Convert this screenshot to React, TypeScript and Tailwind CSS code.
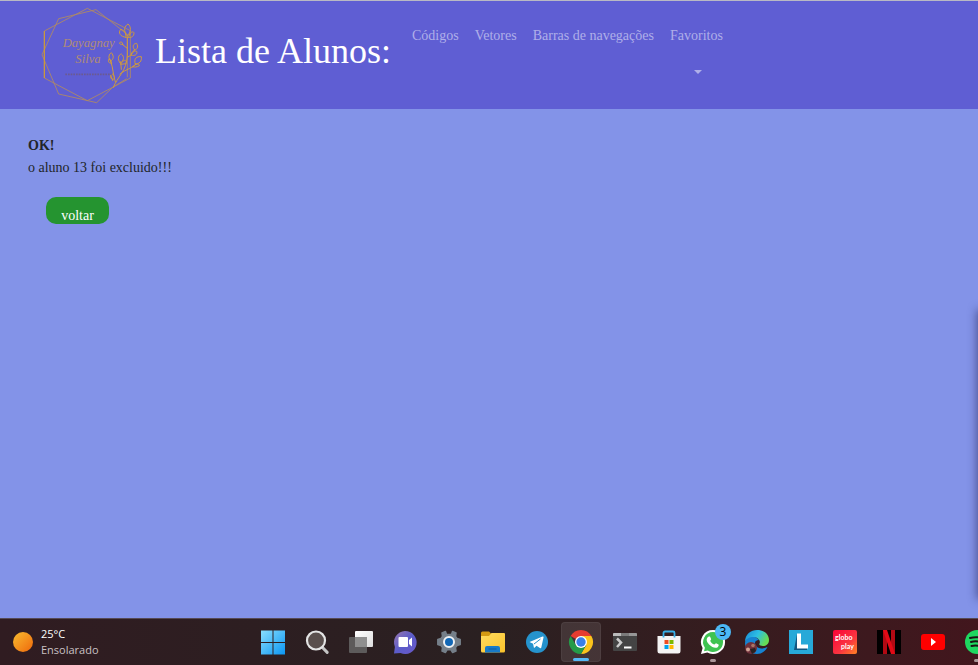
import React from "react";

function Logo() {
  return (
    <svg viewBox="18 9 327 312" className="h-[104px] w-[109px] shrink-0" role="img" aria-label="Logo">
      <g fill="none" stroke="#b08a62" strokeWidth="2.6" strokeLinejoin="round">
        <path d="M43 93 L172 25 L301 92 V234 L172 302 L43 234 Z" />
        <path d="M86 56 L198 29 L294 105 M36 164 L86 56 M36 164 L86 282 L200 308 L248 262 L290 236" />
        <path d="M43 93 V234" stroke="#d49e2f" strokeWidth="3" />
        <path d="M292 110 V232" />
      </g>
      <g fill="none" stroke="#cf9a3e" strokeWidth="3" strokeLinecap="round">
        <path d="M250 262 C262 230 290 215 292 165 V112 M256 246 C248 220 250 205 242 184 M270 222 C290 206 308 205 318 192 M292 172 C304 166 310 158 314 148 M292 145 L278 134 M248 240 l-6 -14 M274 208 L272 185" />
        <path d="M292 108 C278 92 284 78 294 72 C304 80 304 96 292 108 Z M288 112 C270 110 264 98 272 88 C286 92 288 102 288 112 Z M296 112 C298 98 308 92 312 98 C312 108 306 114 296 112 Z" />
        <path d="M314 150 C304 138 312 130 320 130 C326 142 322 148 314 150 Z M304 165 C304 154 310 152 320 154 C324 162 314 170 304 165 Z M316 192 C310 176 320 168 334 170 C336 184 328 192 316 192 Z M308 200 C320 188 330 192 328 197 C320 202 314 202 308 200 Z" />
        <path d="M242 184 C232 172 238 162 244 158 C252 168 252 176 242 184 Z M244 190 C232 190 234 178 238 176 Z M271 190 C260 176 266 164 274 162 C284 170 282 182 271 190 Z M272 192 C282 176 292 178 288 190 Z M248 240 C238 232 242 224 248 222 C256 230 254 236 248 240 Z M278 134 C264 134 268 124 274 126 Z" />
      </g>
      <g fill="#b08c76" fontFamily="Liberation Serif, serif" fontStyle="italic">
        <text x="98" y="142" fontSize="38">Dayagnay</text>
        <text x="136" y="188" fontSize="38">Silva</text>
      </g>
      <path d="M106 223 H245" stroke="#6b5a91" strokeWidth="5" strokeDasharray="5 3" />
    </svg>
  );
}

const icon = "h-6 w-6 shrink-0 overflow-visible";

function StartIcon() {
  return (
    <svg viewBox="0 0 24 24" className={icon}>
      <defs><linearGradient id="win" x1="0" y1="0" x2="24" y2="24" gradientUnits="userSpaceOnUse"><stop stopColor="#8be0fd" /><stop offset="1" stopColor="#0c96f2" /></linearGradient></defs>
      <path fill="url(#win)" d="M0 .500h11.500V12H0zM12.500 .500H24V12H12.500zM0 13h11.500v11.500H0zM12.500 13H24v11.500H12.500z" />
    </svg>
  );
}
function SearchIcon() {
  return (
    <svg viewBox="0 0 24 24" className={icon}>
      <path d="M17 17l5.2 5.4" stroke="#c4c4c4" strokeWidth="3" strokeLinecap="round" />
      <circle cx="11" cy="10.500" r="9" fill="#5a4f4d" stroke="#e4e4e4" strokeWidth="2.200" />
    </svg>
  );
}
function TaskViewIcon() {
  return (
    <svg viewBox="0 0 24 24" className={icon}>
      <defs><linearGradient id="tv" x2="1" y2="1"><stop stopColor="#fff" /><stop offset="1" stopColor="#ddd" /></linearGradient></defs>
      <rect x="6" y="1" width="18" height="16" rx="1" fill="url(#tv)" />
      <rect x="0" y="7" width="18" height="16" rx="1" fill="#5d5b5b" />
      <rect x="6" y="7" width="12" height="10" fill="#8f8f8f" />
    </svg>
  );
}
function ChatIcon() {
  return (
    <svg viewBox="0 0 24 24" className={icon}>
      <defs><linearGradient id="chat" x2="1" y2="1"><stop stopColor="#9a78ae" /><stop offset=".5" stopColor="#5b5cc9" /><stop offset="1" stopColor="#6a58c8" /></linearGradient></defs>
      <path fill="url(#chat)" d="M12 1a11.500 11.500 0 1 1-4.500 22L1 23.500 1.900 17A11.500 11.500 0 0 1 12 1z" />
      <rect x="5.500" y="7" width="9.500" height="10" rx="1" fill="#fff" />
      <path fill="#fff" d="M16 10l3-2.500v9L16 14z" />
    </svg>
  );
}
function SettingsIcon() {
  return (
    <svg viewBox="0 0 24 24" className={icon}>
      <path fill="#757f89" stroke="#757f89" strokeWidth="1.500" strokeLinejoin="round" d="M9.500 4.500L8.500 1.500 5 3l.5 3.500L4 8.500 .8 9.500v5l3.200 1L5.500 17.500 5 21l3.500 1.500L10 19.800h4l1.500 2.700L19 21l-.5-3.500L20 15.500l3.200-1v-5L20 8.500l-1.500-2L19 3l-3.500-1.500-1 3z" />
      <circle cx="12" cy="12" r="5" fill="#1267b5" stroke="#f0f2f4" strokeWidth="2" />
    </svg>
  );
}
function FolderIcon() {
  return (
    <svg viewBox="0 0 24 24" className={icon}>
      <defs><linearGradient id="folder" y2="1" x2="1"><stop stopColor="#ffdc60" /><stop offset="1" stopColor="#fac32b" /></linearGradient></defs>
      <path fill="#d49a13" d="M0 3a1.500 1.500 0 0 1 1.500-1.500H8L10.500 4v4H0z" />
      <path fill="url(#folder)" d="M0 6h8l2.500-3H23a1 1 0 0 1 1 1v17a1.500 1.500 0 0 1-1.500 1.500h-21A1.500 1.500 0 0 1 0 21z" />
      <path fill="#187bc8" d="M4 22.500V18a2 2 0 0 1 2-2h11a2 2 0 0 1 2 2v4.500z" /><path d="M7.500 19h8" stroke="#0e5c9e" />
    </svg>
  );
}
function TelegramIcon() {
  return (
    <svg viewBox="0 0 24 24" className={icon}>
      <circle cx="12" cy="12" r="11" fill="#2593cd" />
      <path fill="#fff" d="M4.500 12L17.500 6.500c.7-.3 1.200.2 1 1l-2.200 10c-.2.8-.7 1-1.400.6L11.500 15.700 9.800 17.500c-.5.5-.9.3-1-.3l-.7-3.500z" />
      <path d="M9 14l6.500-5" stroke="#2593cd" />
    </svg>
  );
}
function ChromeIcon() {
  return (
    <svg viewBox="0 0 24 24" className={icon}>
      <path fill="#e63c30" d="M12 12L1.600 6A12 12 0 0 1 22.400 6z" />
      <path fill="#fbc31c" d="M12 12V6h10.400A12 12 0 0 1 12 24l5.200-9z" />
      <path fill="#249b48" d="M12 12l5.200 3L12 24A12 12 0 0 1 1.600 6l5.200 9z" />
      <circle cx="12" cy="12" r="6" fill="#fff" /><circle cx="12" cy="12" r="4.700" fill="#397fe9" />
    </svg>
  );
}
function TerminalIcon() {
  return (
    <svg viewBox="0 0 24 24" className={icon}>
      <rect y="3" width="24" height="18" rx="1" fill="#444" />
      <path fill="#bbb" d="M0 4a1 1 0 0 1 1-1h7v3H0z" /><path fill="#7b7b7b" d="M8 3h8v3H8z" /><path fill="#969696" d="M16 3h7a1 1 0 0 1 1 1v2h-8z" />
      <path d="M4 8.500l4 4-4 4.500" fill="none" stroke="#ccc" strokeWidth="2.500" /><path d="M11 17.500h7.500" stroke="#fff" strokeWidth="2" />
    </svg>
  );
}
function StoreIcon() {
  return (
    <svg viewBox="0 0 24 24" className={icon}>
      <path fill="#f4f4f4" d="M.5 6h23v15a2.500 2.500 0 0 1-2.500 2.500H3A2.500 2.500 0 0 1 .5 21z" />
      <path d="M6.500 7.500V3a1.500 1.500 0 0 1 1.500-1.500h8A1.500 1.500 0 0 1 17.500 3v4.500" fill="none" stroke="#36b0e8" strokeWidth="1.800" />
      <path fill="#ee4d20" d="M7.500 10h4v4h-4z" /><path fill="#7cb900" d="M12.500 10h4v4h-4z" /><path fill="#00a2ed" d="M7.500 15h4v4h-4z" /><path fill="#feb800" d="M12.500 15h4v4h-4z" />
    </svg>
  );
}
function WhatsAppIcon() {
  return (
    <svg viewBox="0 0 24 24" className={icon}>
      <path fill="#fff" d="M12 0a12 12 0 1 1-5.700 22.500L0 24l1.600-6A12 12 0 0 1 12 0z" />
      <path fill="#3fc351" d="M12 2a10 10 0 1 1-5.200 18.500L3 21.300l.9-3.600A10 10 0 0 1 12 2z" />
      <path fill="#fff" d="M8 6.500c.5-.2 1-.1 1.200.4l.9 2.200c.2.500-.9 1.500-.8 1.900.9 1.700 2.100 2.800 4 3.600.5.100 1.200-1.500 1.800-1.300l2.400 1.200c.6.400-.1 2.200-.8 2.700-2.500 1.700-6-.2-8-2.200-2.200-2.200-4-5-2.400-7.300.4-.6.900-1 1.700-1.200z" />
    </svg>
  );
}
function EdgeIcon() {
  return (
    <svg viewBox="0 0 24 24" className={icon}>
      <defs>
        <linearGradient id="edge" x2="1" y2=".4"><stop stopColor="#1887d6" /><stop offset=".55" stopColor="#2dbfe4" /><stop offset="1" stopColor="#66dc55" /></linearGradient>
      </defs>
      <path fill="#1683d2" d="M0 13C1 4 10 5 14 10c-4 0-5 3-3 6 2 3 7 3 11.500 1C20 22 16 24 12 24 5 24 0 19 0 13z" />
      <path fill="url(#edge)" d="M0 12C0 4 6 0 12 0c8 0 12 5 12 10 0 4-3 6-6 6-2.500 0-4.500-1-3.500-2.500C16 11 13 7 8.500 7 4 7 1 9 0 12z" />
      <circle cx="6" cy="18" r="6" fill="#70313b" /><circle cx="3" cy="19.500" r="2" fill="#d2a496" /><circle cx="8" cy="15.500" r="1.800" fill="#a87564" /><path fill="#28211f" d="M5 19l5-1 1 3-4 3z" />
    </svg>
  );
}
function LIcon() {
  return (
    <svg viewBox="0 0 24 24" className={icon}>
      <path fill="#27a9d8" d="M0 0h24v24H0z" /><path fill="#135781" d="M8 4L5 20h13V17H8z" />
      <path fill="#fff" d="M8 3.500h4v11h7v4H8z" />
    </svg>
  );
}
function GloboIcon() {
  return (
    <svg viewBox="0 0 24 24" className={icon}>
      <defs><linearGradient id="globo" x2="1" y2="1"><stop stopColor="#fb0337" /><stop offset=".6" stopColor="#fa3540" /><stop offset="1" stopColor="#ff8423" /></linearGradient></defs>
      <rect width="24" height="24" rx="2" fill="url(#globo)" />
      <g fill="#fff" fontFamily="Lato, sans-serif" fontWeight="700" fontSize="7"><text x="2" y="10">globo</text><text x="8" y="19">play</text></g>
    </svg>
  );
}
function NetflixIcon() {
  return (
    <svg viewBox="0 0 24 24" className={icon}>
      <path d="M0 0h24v24H0z" /><path fill="#b20913" d="M6 0h4v24H6zM14 0h4v24h-4z" /><path fill="#e20a16" d="M6 0h4l8 24h-4z" />
    </svg>
  );
}
function YouTubeIcon() {
  return (
    <svg viewBox="0 0 24 24" className={icon}>
      <rect y="4" width="24" height="16" rx="3" fill="#f00" /><path fill="#fff" d="M10 8l5 4-5 4z" />
    </svg>
  );
}
function SpotifyIcon() {
  return (
    <svg viewBox="0 0 24 24" className={icon}>
      <circle cx="12" cy="12" r="12" fill="#1ed760" />
      <path d="M5 8c5-1.500 10-1 15 1M6 12c4-1.200 8-.8 12 1M6.500 16c3.500-1 7-.5 10 1" fill="none" stroke="#191414" strokeWidth="2" strokeLinecap="round" />
    </svg>
  );
}

const apps = [
  { name: "Iniciar", Icon: StartIcon },
  { name: "Pesquisar", Icon: SearchIcon },
  { name: "Visão de Tarefas", Icon: TaskViewIcon },
  { name: "Chat", Icon: ChatIcon },
  { name: "Configurações", Icon: SettingsIcon },
  { name: "Explorador de Arquivos", Icon: FolderIcon },
  { name: "Telegram", Icon: TelegramIcon },
  { name: "Google Chrome", Icon: ChromeIcon, active: true },
  { name: "Terminal", Icon: TerminalIcon },
  { name: "Microsoft Store", Icon: StoreIcon },
  { name: "WhatsApp", Icon: WhatsAppIcon, badge: "3", running: true },
  { name: "Microsoft Edge", Icon: EdgeIcon },
  { name: "L", Icon: LIcon },
  { name: "Globoplay", Icon: GloboIcon },
  { name: "Netflix", Icon: NetflixIcon },
  { name: "YouTube", Icon: YouTubeIcon },
  { name: "Spotify", Icon: SpotifyIcon, running: true },
];

function Taskbar() {
  return (
    <footer className="flex h-[47px] shrink-0 overflow-hidden border-t border-[#554a55] bg-linear-to-r from-[#301c21] via-[#2a2021] via-50% to-[#42161d] font-['Open_Sans',sans-serif]">
      <button type="button" className="flex w-[253px] shrink-0 items-center gap-2 pl-[13px] text-left text-[11px] leading-4">
        <span className="size-5 rounded-full bg-linear-to-br from-[#f7bb2f] to-[#ed6608]" />
        <span>
          <span className="block text-white">25°C</span>
          <span className="block text-[#c9c1c3]">Ensolarado</span>
        </span>
      </button>
      <div className="flex shrink-0 items-center gap-1">
        {apps.map(({ name, Icon, active, badge, running }) => (
          <button
            key={name}
            type="button"
            aria-label={name}
            className={`relative flex size-10 shrink-0 items-center justify-center rounded ${active ? "border border-white/5 bg-white/10" : ""}`}
          >
            <Icon />
            {badge && <span className="absolute top-0.5 right-0.5 flex size-4 items-center justify-center rounded-full bg-[#4cb8f5] text-xs text-black">{badge}</span>}
            {active && <span className="absolute bottom-0 h-[3px] w-4 rounded-full bg-[#55b9f7]" />}
            {running && <span className="absolute bottom-0 h-[3px] w-1.5 rounded-full bg-[#ab9699]" />}
          </button>
        ))}
      </div>
    </footer>
  );
}

export default function App() {
  return (
    <div className="flex min-h-screen flex-col overflow-hidden bg-[#8393e8] font-['Liberation_Serif',serif] text-[#212529]">
      <header className="flex h-[109px] shrink-0 items-start border-t border-[#b9b9c4] bg-[#5f5ed3] pl-9">
        <div className="flex items-start gap-2.5 pt-0.5">
          <Logo />
          <h1 className="pt-7 text-4xl leading-10 whitespace-nowrap text-white">Lista de Alunos:</h1>
        </div>
        <nav className="ml-[21px] flex gap-4 pt-[23px] text-sm leading-6 whitespace-nowrap text-[#afafe9]">
          <a href="#codigos">Códigos</a>
          <a href="#vetores">Vetores</a>
          <a href="#barras">Barras de navegações</a>
          <button type="button" className="flex flex-col items-center gap-[22px]">
            Favoritos
            <span className="ml-1 border-x-4 border-t-4 border-x-transparent border-t-[#afafe9]" />
          </button>
        </nav>
      </header>
      <main className="relative flex-1 px-7 pt-[26px] text-sm leading-[22px]">
        <strong className="block">OK!</strong>
        <p>o aluno 13 foi excluido!!!</p>
        <button type="button" className="mt-[18px] ml-[18px] flex h-[27px] w-[63px] items-end justify-center overflow-hidden rounded-[10px] bg-[#259430] leading-4 text-white">
          voltar
        </button>
        <div className="absolute top-[202px] -right-2 bottom-5 w-2 shadow-[0_0_10px_1px_rgba(30,35,80,0.6)]" />
      </main>
      <Taskbar />
    </div>
  );
}
